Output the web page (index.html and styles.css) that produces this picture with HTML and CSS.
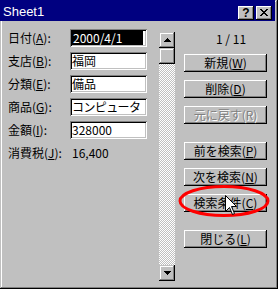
FILE: index.html
```html
<!DOCTYPE html>
<html lang="ja">
<head>
<meta charset="utf-8">
<link rel="stylesheet" href="styles.css">
</head>
<body>
<div class="window">
  <div class="titlebar">
    <span class="title">Sheet1</span>
    <div class="tbtns">
      <span class="tbtn">?</span>
      <span class="tbtn">
        <svg width="8" height="7" viewBox="0 0 8 7"><path d="M0 0h2v1h1v1h2V1h1V0h2v1H7v1H6v1H5v1h1v1h1v1h1v1H6V6H5V5H3v1H2v1H0V6h1V5h1V4h1V3H2V2H1V1H0z" fill="#000"/></svg>
      </span>
    </div>
  </div>
  <div class="body">
    <div class="form">
      <div class="row"><span class="label">日付(<u>A</u>):</span><span class="field"><span class="sel">2000/4/1</span></span></div>
      <div class="row"><span class="label">支店(<u>B</u>):</span><span class="field">福岡</span></div>
      <div class="row"><span class="label">分類(<u>E</u>):</span><span class="field">備品</span></div>
      <div class="row"><span class="label">商品(<u>G</u>):</span><span class="field tight">コンピュータ</span></div>
      <div class="row"><span class="label">金額(<u>I</u>):</span><span class="field">328000</span></div>
      <div class="row"><span class="label">消費税(<u>J</u>):</span><span class="value">16,400</span></div>
    </div>
    <div class="scrollbar">
      <span class="sbtn"><svg width="7" height="4" viewBox="0 0 7 4"><path d="M3 0h1v1h1v1h1v1h1v1H0V3h1V2h1V1h1z" fill="#000"/></svg></span>
      <span class="thumb"></span>
      <span class="track"></span>
      <span class="sbtn"><svg width="7" height="4" viewBox="0 0 7 4"><path d="M0 0h7v1H6v1H5v1H4v1H3V3H2V2H1V1H0z" fill="#000"/></svg></span>
    </div>
    <div class="side">
      <div class="counter">1 / 11</div>
      <div class="group">
        <span class="btn">新規(<u>W</u>)</span>
        <span class="btn">削除(<u>D</u>)</span>
        <span class="btn disabled">元に戻す(R)</span>
      </div>
      <div class="group">
        <span class="btn">前を検索(<u>P</u>)</span>
        <span class="btn">次を検索(<u>N</u>)</span>
        <span class="btn">検索条件(<u>C</u>)</span>
      </div>
      <div class="group">
        <span class="btn">閉じる(<u>L</u>)</span>
      </div>
    </div>
  </div>
  <svg class="mark" width="100" height="40" viewBox="0 0 100 40">
    <ellipse cx="46" cy="17" rx="44" ry="14.5" fill="none" stroke="#ff0000" stroke-width="3"/>
  </svg>
  <svg class="cursor" width="12" height="20" viewBox="0 0 12 20">
    <path d="M0.5 0.5V16.5L4.5 12.5L7.5 19.5L9.5 18.5L6.5 11.5H11.5Z" fill="#fff" stroke="#000" stroke-width="1"/>
  </svg>
</div>
</body>
</html>
```

FILE: styles.css
```css
* { box-sizing: border-box; }
html, body { margin: 0; padding: 0; background: #c0c0c0; }
body { font-family: "Noto Sans CJK JP", "Liberation Sans", sans-serif; font-size: 12px; color: #000; }

.window {
  position: relative;
  width: 278px;
  height: 289px;
  background: #c0c0c0;
  box-shadow: inset -1px -1px #000, inset 1px 1px #c0c0c0, inset -2px -2px #808080, inset 2px 2px #fff;
  display: flex;
  flex-direction: column;
}

.titlebar {
  height: 21px;
  margin-right: 3px;
  background: #000080;
  display: flex;
  align-items: center;
  justify-content: space-between;
  padding: 0 3px 0 3px;
}
.title {
  color: #fff;
  font-family: "Liberation Sans", Arial, sans-serif;
  font-size: 13px;
  line-height: 14px;
  margin-top: 2px;
}
.tbtns { display: flex; gap: 2px; margin-top: 4px; }
.tbtn {
  width: 16px;
  height: 14px;
  background: #c0c0c0;
  box-shadow: inset -1px -1px #000, inset 1px 1px #fff, inset -2px -2px #808080;
  display: flex;
  align-items: center;
  justify-content: center;
  font-family: "Liberation Sans", Arial, sans-serif;
  font-weight: bold;
  font-size: 12px;
  line-height: 12px;
}

.body {
  flex: 1;
  display: flex;
  padding: 8px 0 0 8px;
}

.form { width: 151px; display: flex; flex-direction: column; gap: 5px; }
.row { display: flex; align-items: center; height: 18px; }
.label { width: 62px; flex: none; white-space: nowrap; line-height: 14px; }
.field {
  width: 77px;
  flex: none;
  height: 18px;
  background: #fff;
  box-shadow: inset 1px 1px #808080, inset -1px -1px #fff, inset 2px 2px #000, inset -2px -2px #c0c0c0;
  padding: 2px 1px 2px 2px;
  line-height: 14px;
  white-space: nowrap;
  overflow: hidden;
}
.field.tight { letter-spacing: -0.6px; }
.sel {
  display: block;
  width: 71px;
  height: 14px;
  padding-left: 1px;
  background: #000;
  color: #fff;
}
.value { line-height: 14px; margin-left: 2px; }

.scrollbar {
  width: 16px;
  margin-top: 3px;
  margin-bottom: 8px;
  display: flex;
  flex-direction: column;
}
.sbtn, .thumb {
  width: 16px;
  height: 16px;
  background: #c0c0c0;
  box-shadow: inset -1px -1px #000, inset 1px 1px #c0c0c0, inset -2px -2px #808080, inset 2px 2px #fff;
  display: flex;
  align-items: center;
  justify-content: center;
  flex: none;
}
.track {
  flex: 1;
  background-color: #c0c0c0;
  background-image: repeating-conic-gradient(#fff 0 25%, #c0c0c0 0 50%);
  background-size: 2px 2px;
}

.side {
  width: 83px;
  margin-left: 9px;
  display: flex;
  flex-direction: column;
  gap: 18px;
}
.counter { height: 14px; line-height: 14px; margin-top: 3px; padding-left: 32px; margin-bottom: -10px; }
.group { display: flex; flex-direction: column; gap: 8px; }
.btn {
  height: 18px;
  background: #c0c0c0;
  box-shadow: inset -1px -1px #000, inset 1px 1px #fff, inset -2px -2px #808080;
  display: flex;
  align-items: center;
  justify-content: center;
  line-height: 14px;
  white-space: nowrap;
}
.btn.disabled { color: #808080; text-shadow: 1px 1px #fff; }
u { text-decoration: underline; text-underline-offset: 1px; }

.mark { position: absolute; left: 178px; top: 184px; }
.cursor { position: absolute; left: 225px; top: 195px; }
```
